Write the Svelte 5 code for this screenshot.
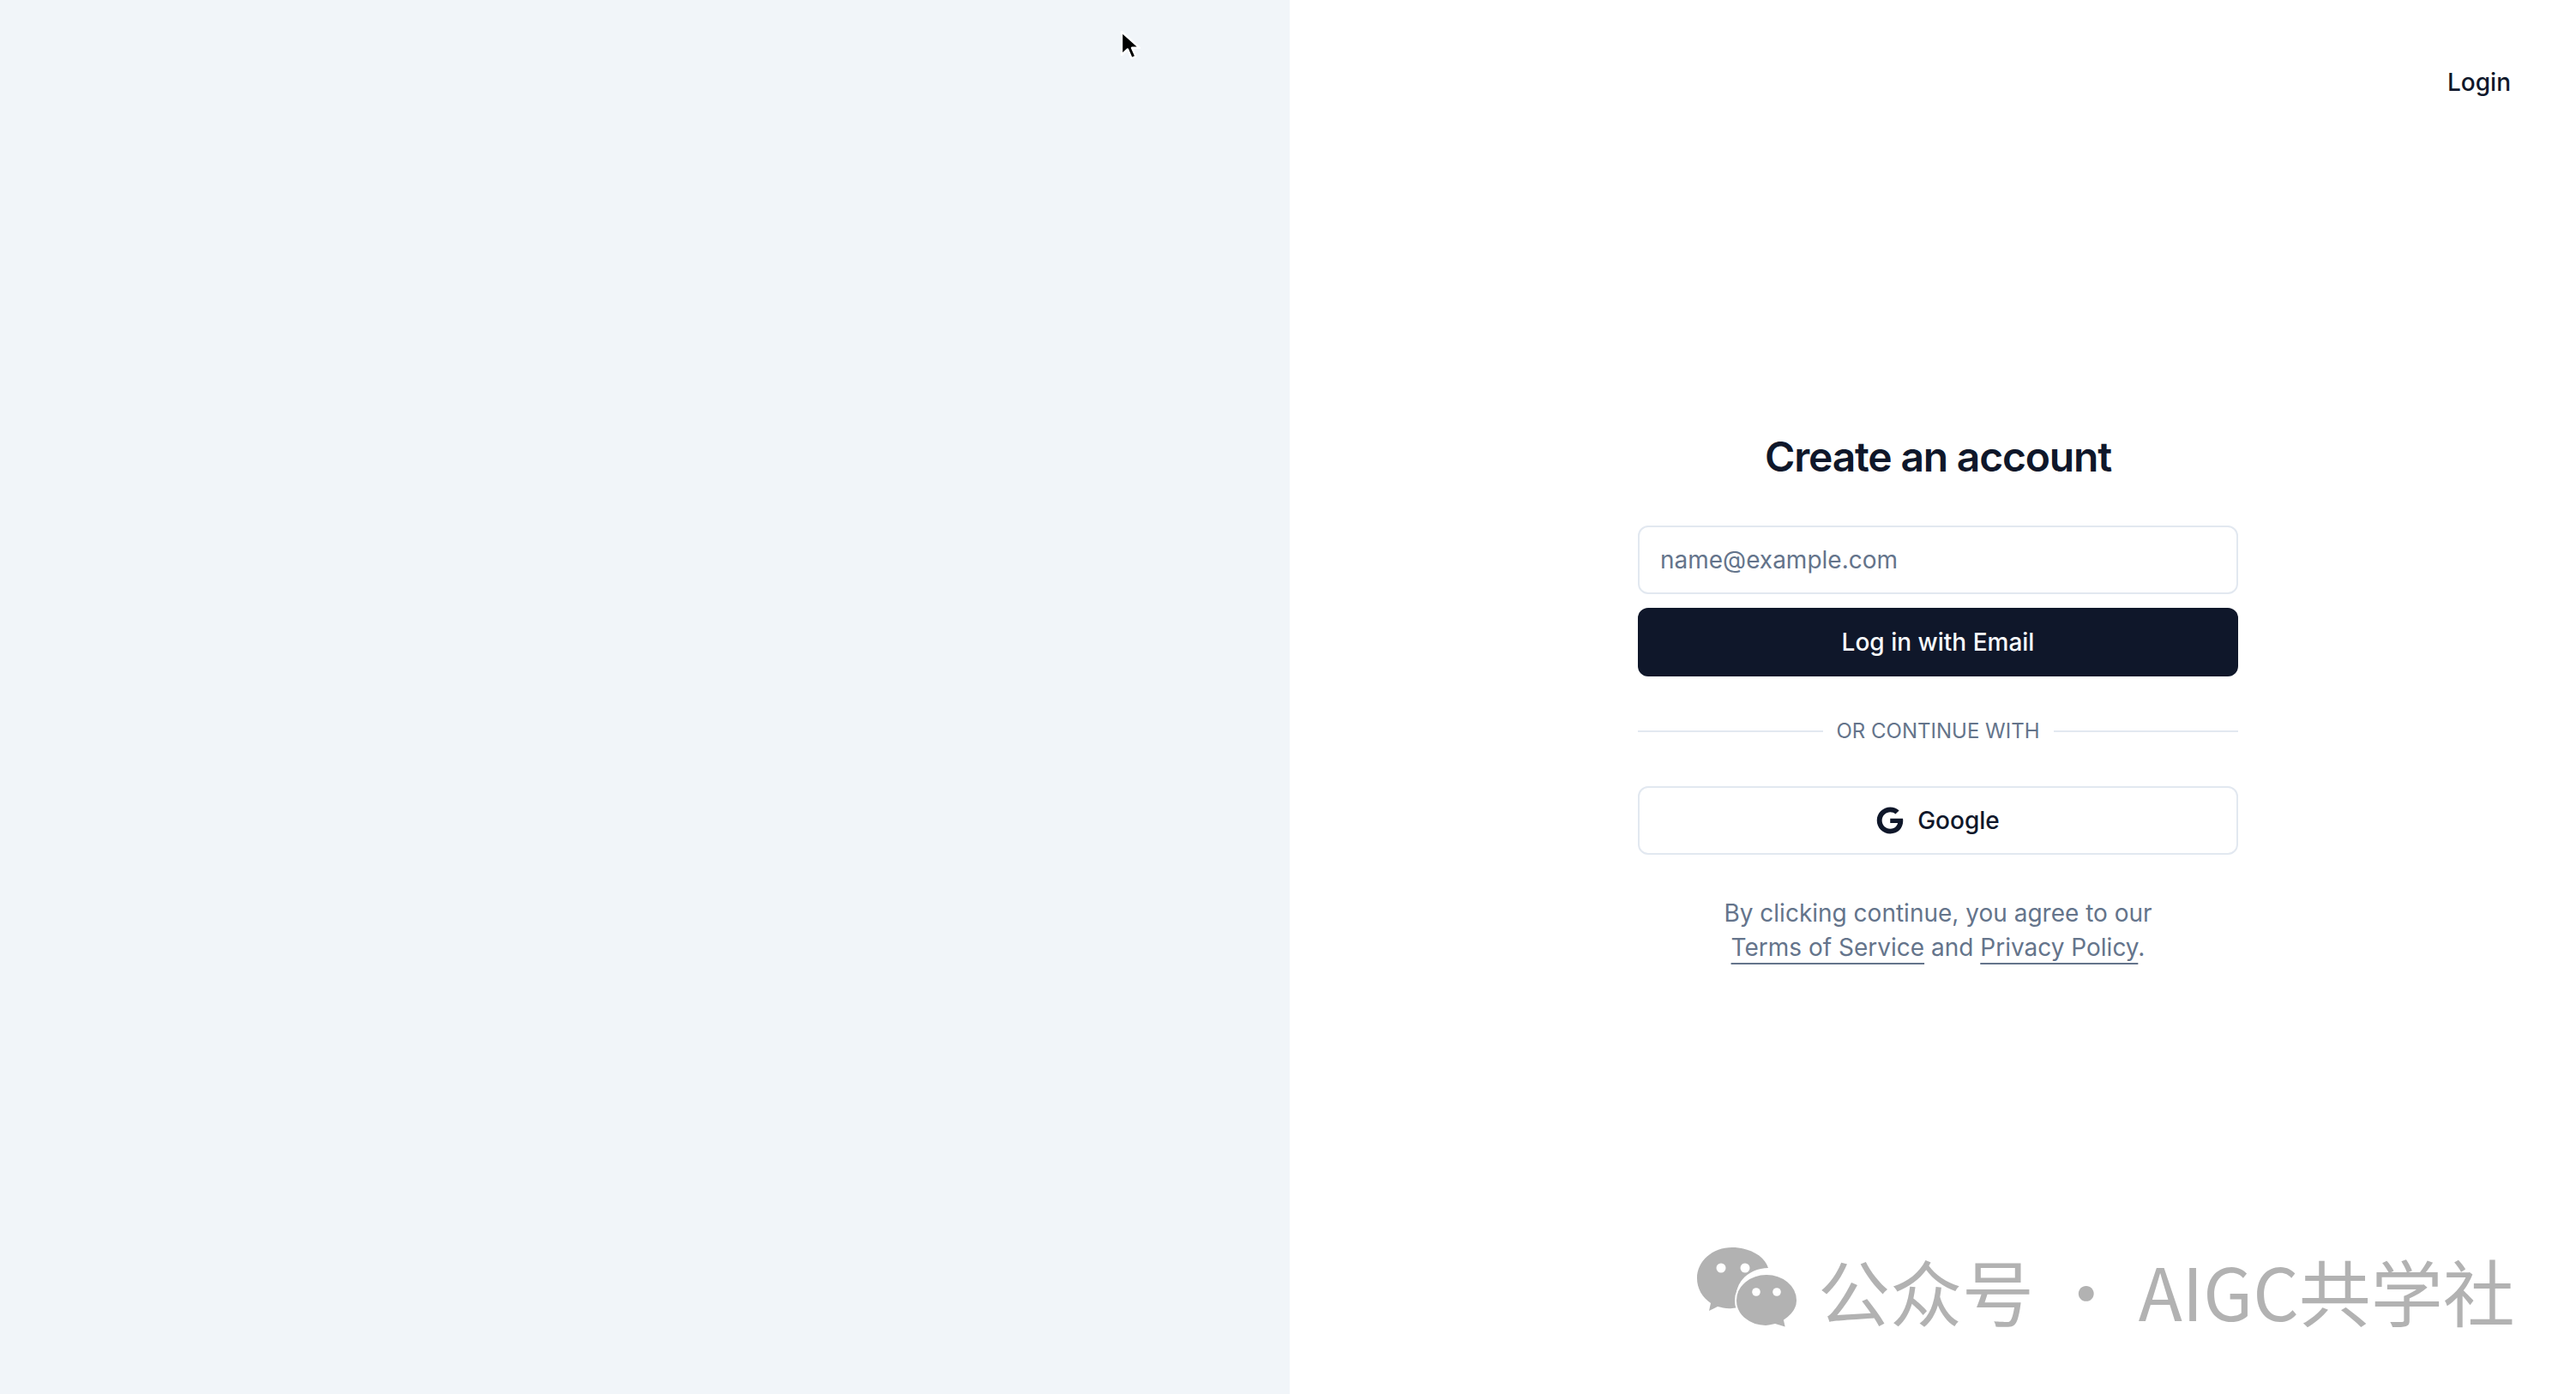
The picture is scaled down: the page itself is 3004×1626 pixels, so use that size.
<script lang="ts">
  let email = $state('');
</script>

<div class="page">
  <aside class="side"></aside>

  <main class="pane">
    <a class="login" href="#login">Login</a>

    <div class="card">
      <h1>Create an account</h1>

      <form class="form">
        <input type="email" placeholder="name@example.com" bind:value={email} />
        <button type="button" class="primary">Log in with Email</button>
      </form>

      <div class="divider">
        <span class="line"></span>
        <span class="divider-label">Or continue with</span>
        <span class="line"></span>
      </div>

      <button type="button" class="outline">
        <svg class="g-icon" viewBox="0 0 488 512" aria-hidden="true">
          <path fill="currentColor" d="M488 261.8C488 403.3 391.1 504 248 504 110.8 504 0 393.2 0 256S110.8 8 248 8c66.8 0 123 24.5 166.3 64.9l-67.5 64.9C258.5 52.6 94.3 116.6 94.3 256c0 86.5 69.1 156.6 153.7 156.6 98.2 0 135-70.4 140.8-106.9H248v-85.3h236.1c2.3 12.7 3.9 24.9 3.9 41.4z" />
        </svg>
        Google
      </button>

      <p class="terms">
        By clicking continue, you agree to our<br />
        <a href="#terms">Terms of Service</a> and <a href="#privacy">Privacy Policy</a>.
      </p>
    </div>
  </main>

  <!-- recorded pointer and the watermark sit over the page -->
  <svg class="cursor" viewBox="0 0 26 38" aria-hidden="true">
    <path d="M3 2v27l7-6.5 4.5 10.5 5-2.2-4.5-10h9z" fill="#000" stroke="#fff" stroke-width="2.4" stroke-linejoin="round" />
  </svg>

  <div class="watermark">
    <svg class="wechat" viewBox="0 0 160 130" aria-hidden="true">
      <path fill="#b2b2b2" d="M60 15c-23 0-41 16-41 36 0 12 6 22 16 29l-2 9 10-5c5 1 11 3 17 2l8-1c-3-6-4-10-3-17 2-17 19-29 37-29-4-14-22-24-42-24z" />
      <circle cx="47" cy="39" r="5.5" fill="#fff" />
      <circle cx="75" cy="39" r="5.5" fill="#fff" />
      <path fill="#b2b2b2" stroke="#fff" stroke-width="2" d="M100 46c-19 0-36 13-36 31 0 17 16 30 35 30 4 0 7-1 11-2l13 4-2-9c9-6 15-14 15-23 0-18-17-31-36-31z" />
      <circle cx="88" cy="67" r="4.8" fill="#fff" />
      <circle cx="112" cy="67" r="4.8" fill="#fff" />
    </svg>
    <span class="wm-text">公众号 · AIGC共学社</span>
  </div>
</div>

<style>
  :global(body) {
    margin: 0;
    background: #fff;
  }

  .page {
    position: relative;
    display: flex;
    width: 3004px;
    height: 1626px;
    overflow: hidden;
    font-family: Inter, 'Liberation Sans', sans-serif;
    color: #0f172a;
  }

  .side {
    width: 1504px;
    flex-shrink: 0;
    background: #f1f5f9;
  }

  .pane {
    position: relative;
    flex: 1;
    display: flex;
    flex-direction: column;
    align-items: center;
    justify-content: center;
    padding-left: 12px;
  }

  .login {
    position: absolute;
    top: 76px;
    right: 76px;
    font-size: 28px;
    line-height: 40px;
    font-weight: 500;
    color: #0f172a;
    text-decoration: none;
  }

  .card {
    width: 700px;
    display: flex;
    flex-direction: column;
  }

  h1 {
    margin: 0 0 48px;
    text-align: center;
    font-size: 48px;
    line-height: 64px;
    font-weight: 600;
    letter-spacing: -1.2px;
  }

  .form {
    display: flex;
    flex-direction: column;
    gap: 16px;
  }

  input,
  button {
    box-sizing: border-box;
    width: 100%;
    height: 80px;
    border-radius: 12px;
    font-family: inherit;
    font-size: 28px;
  }

  input {
    padding: 0 24px;
    border: 2px solid #e2e8f0;
    background: #fff;
    color: #0f172a;
    outline: none;
  }

  input::placeholder {
    color: #64748b;
    opacity: 1;
  }

  .primary {
    border: none;
    background: #0f172a;
    color: #f8fafc;
    font-weight: 500;
  }

  .divider {
    display: flex;
    align-items: center;
    gap: 16px;
    margin: 48px 0;
  }

  .line {
    flex: 1;
    height: 2px;
    background: #e2e8f0;
  }

  .divider-label {
    font-size: 24px;
    line-height: 32px;
    color: #64748b;
    text-transform: uppercase;
  }

  .outline {
    display: flex;
    align-items: center;
    justify-content: center;
    gap: 16px;
    border: 2px solid #e2e8f0;
    background: #fff;
    color: #0f172a;
    font-weight: 500;
  }

  .g-icon {
    width: 32px;
    height: 32px;
  }

  .terms {
    margin: 48px 0 0;
    text-align: center;
    font-size: 28px;
    line-height: 40px;
    color: #64748b;
  }

  .terms a {
    color: inherit;
    text-decoration: underline;
    text-underline-offset: 8px;
    text-decoration-thickness: 2px;
  }

  .cursor {
    position: absolute;
    left: 1305px;
    top: 35px;
    width: 26px;
    height: 38px;
  }

  .watermark {
    position: absolute;
    left: 1960px;
    top: 1440px;
    display: flex;
    align-items: center;
    gap: 0;
    color: #b2b2b2;
  }

  .wechat {
    width: 160px;
    height: 130px;
    flex-shrink: 0;
  }

  .wm-text {
    font-family: 'Noto Sans CJK SC', sans-serif;
    font-size: 84px;
    line-height: 130px;
    white-space: nowrap;
  }
</style>
